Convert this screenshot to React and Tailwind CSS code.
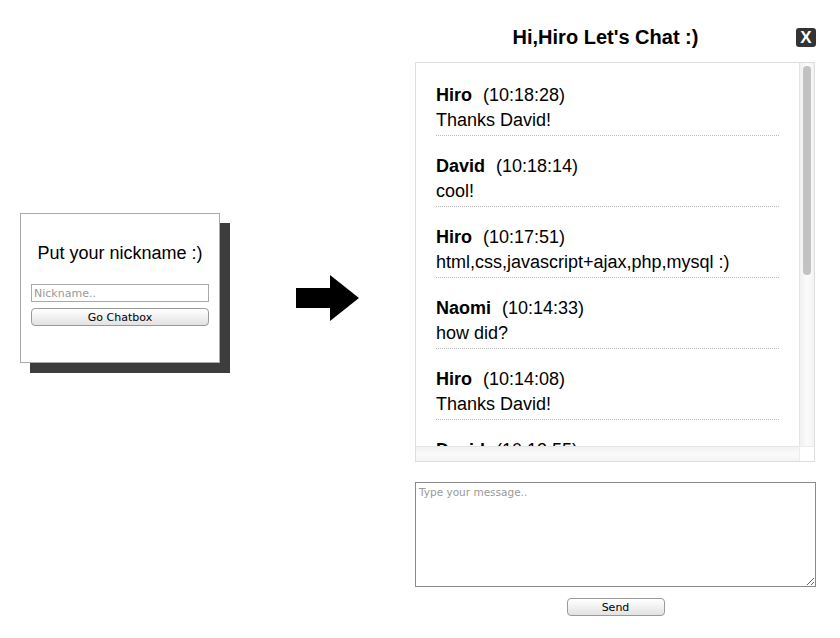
import { useState } from 'react';

const messages = [
  { name: 'Hiro', time: '10:18:28', text: 'Thanks David!' },
  { name: 'David', time: '10:18:14', text: 'cool!' },
  { name: 'Hiro', time: '10:17:51', text: 'html,css,javascript+ajax,php,mysql :)' },
  { name: 'Naomi', time: '10:14:33', text: 'how did?' },
  { name: 'Hiro', time: '10:14:08', text: 'Thanks David!' },
  { name: 'David', time: '10:13:55', text: 'yes, it works fine' },
  { name: 'Naomi', time: '10:13:40', text: 'hello everyone' },
];

function Arrow() {
  return (
    <svg width="63" height="46" viewBox="0 0 63 46">
      <polygon points="0,13 34,13 34,0 63,23 34,46 34,33 0,33" fill="#000" />
    </svg>
  );
}

export default function App() {
  const [nick, setNick] = useState('');
  const [msg, setMsg] = useState('');

  return (
    <div className="w-[840px] h-[638px] bg-white flex items-start font-['Liberation_Sans',Arial,sans-serif] text-black overflow-hidden">
      {/* login card */}
      <div className="ml-[20px] mt-[213px] w-[200px] h-[150px] bg-white border border-[#aaaaaa] shadow-[10px_10px_0_0_#3d3d3d] px-[10px] pt-[28px] shrink-0">
        <div className="text-[18px] leading-[22px] text-center">Put your nickname :)</div>
        <input
          className="mt-[20px] block w-[178px] h-[18px] border border-[#a9a9a9] px-[2px] text-[11px] font-['DejaVu_Sans',sans-serif] outline-none placeholder:text-[#999999]"
          placeholder="Nickname.."
          value={nick}
          onChange={(e) => setNick(e.target.value)}
        />
        <button className="mt-[6px] block w-[178px] h-[18px] rounded-[4px] border border-[#9a9a9a] bg-linear-to-b from-white to-[#e2e2e2] text-[11px] leading-none font-['DejaVu_Sans',sans-serif]">
          Go Chatbox
        </button>
      </div>

      <div className="ml-[76px] mt-[275px] shrink-0">
        <Arrow />
      </div>

      {/* chat column */}
      <div className="ml-[56px] w-[401px] shrink-0">
        <div className="mt-[25px] h-[24px] flex items-center">
          <div className="flex-1 text-center text-[20px] leading-[24px] font-bold">Hi,Hiro Let's Chat :)</div>
          <div className="w-[20px] h-[19px] rounded-[3px] bg-[#333333] text-white font-bold text-[17px] leading-none flex items-center justify-center">X</div>
        </div>

        <div className="mt-[13px] w-[400px] h-[400px] border border-[#dddddd] flex flex-col">
          <div className="flex">
            <div className="w-[383px] h-[383px] overflow-hidden px-5 pt-[2px]">
              {messages.map((m, i) => (
                <div key={i} className="pt-[18px] pb-[2px] border-b border-dotted border-[#bbbbbb] text-[18px] leading-[25px]">
                  <div>
                    <span className="font-bold">{m.name}</span>
                    <span className="ml-[11px]">({m.time})</span>
                  </div>
                  <div>{m.text}</div>
                </div>
              ))}
            </div>
            <div className="w-[15px] h-[383px] border-l border-[#e4e4e4] bg-linear-to-r from-[#f1f1f1] via-[#fbfbfb] to-[#f3f3f3] pl-[3px] pt-[3px]">
              <div className="w-[8px] h-[209px] rounded-full bg-[#c2c2c2]" />
            </div>
          </div>
          <div className="flex h-[15px]">
            <div className="w-[383px] h-[15px] border-t border-[#e4e4e4] bg-linear-to-b from-[#f1f1f1] via-[#fbfbfb] to-[#f3f3f3]" />
            <div className="w-[15px] h-[15px] bg-white border-t border-l border-[#ececec]" />
          </div>
        </div>

        <textarea
          className="mt-[20px] block w-[401px] h-[105px] border border-[#8a8a8a] px-[3px] pt-[2px] text-[10.5px] font-['DejaVu_Sans',sans-serif] outline-none placeholder:text-[#999999]"
          placeholder="Type your message.."
          value={msg}
          onChange={(e) => setMsg(e.target.value)}
        />
        <div className="mt-[11px] flex justify-center">
          <button className="w-[98px] h-[18px] rounded-[4px] border border-[#9a9a9a] bg-linear-to-b from-white to-[#e2e2e2] text-[11px] leading-none font-['DejaVu_Sans',sans-serif]">
            Send
          </button>
        </div>
      </div>
    </div>
  );
}
